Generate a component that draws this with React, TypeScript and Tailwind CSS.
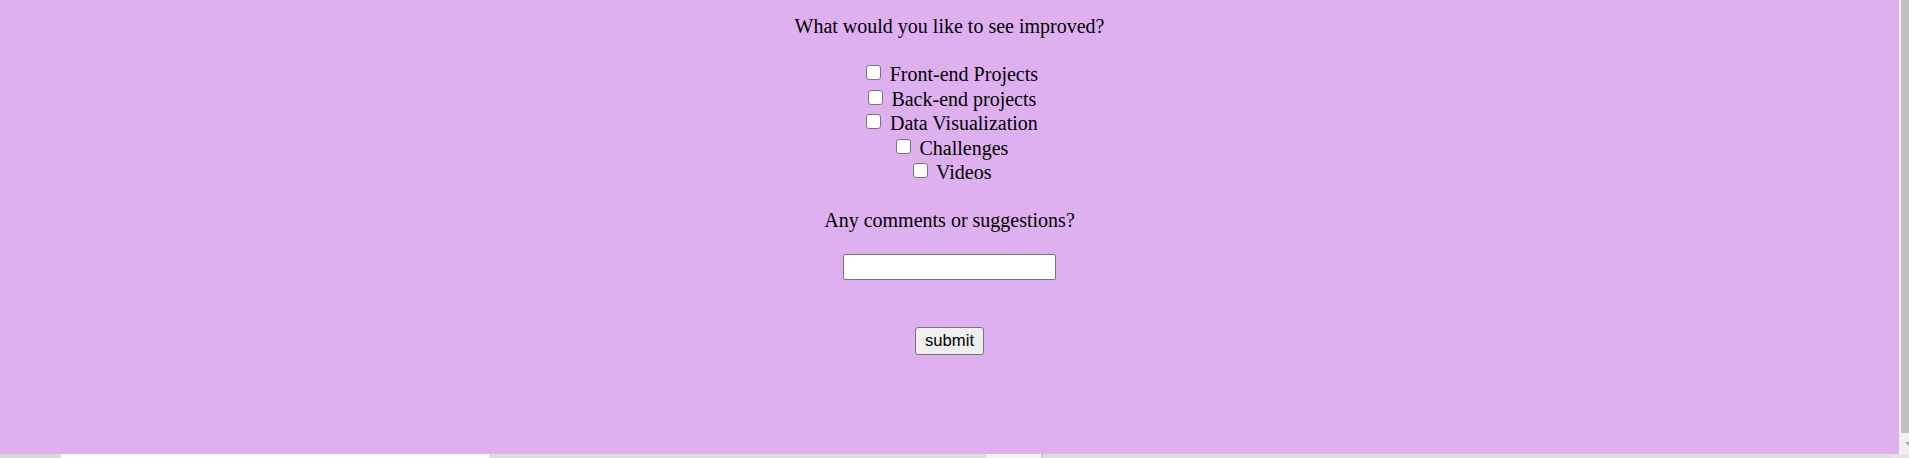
import React from "react";

const options = [
  "Front-end Projects",
  "Back-end projects",
  "Data Visualization",
  "Challenges",
  "Videos",
];

export default function App() {
  return (
    <div className="flex h-[458px] w-full flex-col overflow-hidden bg-[#f0f0f0]">
      <div className="flex h-[454px] w-full">
        <main
          className="flex flex-1 flex-col items-center bg-[#dfb0f0] pt-[14px] text-[20px] leading-[24.5px] text-black"
          style={{ fontFamily: '"Liberation Serif", "Times New Roman", serif' }}
        >
          <p className="h-[24.5px]">What would you like to see improved?</p>
          <div className="mt-[23.5px] flex flex-col items-center">
            {options.map((o) => (
              <label key={o} className="block h-[24.5px] text-center">
                <input
                  type="checkbox"
                  className="mb-[1px] ml-[5px] mr-[3.75px] inline-block h-[15px] w-[15px] cursor-pointer appearance-none rounded-[3px] border border-[#767676] bg-white align-baseline"
                />{" "}
                {o}
              </label>
            ))}
          </div>
          <p className="mt-[23px] h-[24.5px]">Any comments or suggestions?</p>
          <input
            type="text"
            className="mt-[22px] h-[26px] w-[213px] rounded-[2px] border border-[#767676] bg-white px-[2px] outline-none"
          />
          <button
            type="button"
            className="mt-[47px] flex h-[28px] w-[69px] items-center justify-center rounded-[3px] border border-[#767676] bg-[#efefef] text-[16.67px] leading-none text-black"
            style={{ fontFamily: '"Liberation Sans", Arial, sans-serif' }}
          >
            submit
          </button>
        </main>
        <div className="flex w-[10px] flex-col bg-[#f0f0f0]">
          <div className="ml-[2px] h-[433px] bg-[#c1c1c1]" />
          <div className="flex flex-1 items-start justify-end pt-[9px]">
            <div className="h-0 w-0 border-l-[4px] border-r-[0px] border-t-[4px] border-l-transparent border-t-[#a3a3a3]" />
          </div>
        </div>
      </div>
      <div className="flex h-[4px] w-full">
        <div className="w-[61px] bg-[#d9d9d9]" />
        <div className="w-[428px] bg-white" />
        <div className="w-[497px] bg-[#dcdcdc]" />
        <div className="w-[55px] bg-[#f3f3f3]" />
        <div className="w-[2px] bg-[#c8c8c8]" />
        <div className="w-[848px] bg-[#dedede]" />
        <div className="flex-1 bg-[#e8e2e6]" />
      </div>
    </div>
  );
}
